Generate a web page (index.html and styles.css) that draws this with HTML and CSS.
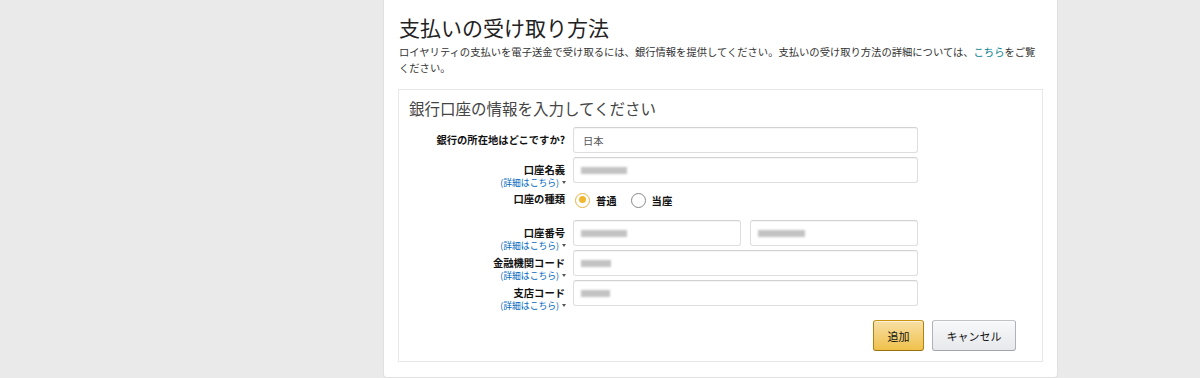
FILE: index.html
```html
<!DOCTYPE html>
<html lang="ja">

<head>
    <meta charset="UTF-8">
    <meta name="viewport" content="width=device-width, initial-scale=1.0">
    <title>支払いの受け取り方法</title>
    <link rel="stylesheet" href="styles.css">
</head>

<body>
    <div class="page">
        <div class="card">
            <h1 class="title">支払いの受け取り方法</h1>
            <p class="desc">ロイヤリティの支払いを電子送金で受け取るには、銀行情報を提供してください。支払いの受け取り方法の詳細については、<a href="#">こちら</a>をご覧ください。</p>

            <div class="panel">
                <h2 class="panel-title">銀行口座の情報を入力してください</h2>

                <div class="row">
                    <div class="label"><span class="main">銀行の所在地はどこですか?</span></div>
                    <div class="field wide"><span class="value">日本</span></div>
                </div>

                <div class="row">
                    <div class="label">
                        <span class="main">口座名義</span>
                        <a class="more" href="#">(詳細はこちら)<i class="caret"></i></a>
                    </div>
                    <div class="field wide"><span class="blur w46"></span></div>
                </div>

                <div class="row radio-row">
                    <div class="label"><span class="main">口座の種類</span></div>
                    <div class="radios">
                        <span class="radio checked"></span><span class="opt">普通</span>
                        <span class="radio"></span><span class="opt">当座</span>
                    </div>
                </div>

                <div class="row">
                    <div class="label">
                        <span class="main">口座番号</span>
                        <a class="more" href="#">(詳細はこちら)<i class="caret"></i></a>
                    </div>
                    <div class="pair">
                        <div class="field half"><span class="blur w46"></span></div>
                        <div class="field half"><span class="blur w47"></span></div>
                    </div>
                </div>

                <div class="row gap5">
                    <div class="label">
                        <span class="main">金融機関コード</span>
                        <a class="more" href="#">(詳細はこちら)<i class="caret"></i></a>
                    </div>
                    <div class="field wide"><span class="blur w30"></span></div>
                </div>

                <div class="row gap6">
                    <div class="label">
                        <span class="main">支店コード</span>
                        <a class="more" href="#">(詳細はこちら)<i class="caret"></i></a>
                    </div>
                    <div class="field wide"><span class="blur w29"></span></div>
                </div>

                <div class="actions">
                    <button class="btn primary">追加</button>
                    <button class="btn">キャンセル</button>
                </div>
            </div>
        </div>
    </div>
</body>

</html>
```

FILE: styles.css
```css
body {
    margin: 0;
    padding: 0;
    background-color: #eaeaea;
    font-family: "Noto Sans CJK JP", "Liberation Sans", sans-serif;
    color: #333;
}

.page {
    padding-left: 383px;
}

.card {
    width: 645px;
    background-color: #fff;
    border: 1px solid #e0e0e0;
    border-top: none;
    border-radius: 0 0 4px 4px;
    padding: 12px 14px 15px 14px;
}

.title {
    font-size: 21px;
    font-weight: normal;
    line-height: 30px;
    margin: 0 0 2px 1px;
    color: #222;
}

.desc {
    font-size: 10.3px;
    line-height: 16px;
    margin: 0 0 13px 0;
    padding-left: 1px;
    color: #333;
}

.desc a {
    color: #0a7f8f;
    text-decoration: none;
}

.panel {
    border: 1px solid #e7e7e7;
    padding: 7px 10px 10px 10px;
}

.panel-title {
    font-size: 15.5px;
    font-weight: normal;
    line-height: 22px;
    margin: 0 0 8px 0;
    color: #444;
}

.row {
    display: flex;
    height: 26px;
    margin-bottom: 4px;
}

.row.gap5 {
    margin-top: 1px;
}

.row.gap6 {
    margin-top: 2px;
}

.label {
    width: 157px;
    margin-right: 7px;
    text-align: right;
    padding-top: 6px;
    flex-shrink: 0;
}

.main {
    display: block;
    font-size: 10.3px;
    font-weight: bold;
    line-height: 14px;
    color: #111;
    padding-right: 1px;
}

.more {
    display: block;
    font-size: 8.8px;
    line-height: 12px;
    color: #0066c0;
    text-decoration: none;
}

.caret {
    display: inline-block;
    width: 0;
    height: 0;
    margin-left: 3px;
    vertical-align: 2px;
    border-left: 2px solid transparent;
    border-right: 2px solid transparent;
    border-top: 3px solid #555;
}

.field {
    box-sizing: border-box;
    height: 26px;
    border: 1px solid #dedede;
    border-top-color: #d2d2d2;
    border-radius: 3px;
    box-shadow: inset 0 1px 0 rgba(0, 0, 0, 0.04);
    padding-left: 9px;
    display: flex;
    align-items: center;
}

.wide {
    width: 345px;
}

.half {
    width: 168px;
}

.pair {
    display: flex;
    gap: 9px;
}

.value {
    font-size: 10.3px;
    color: #555;
}

.blur {
    display: inline-block;
    height: 7px;
    background-color: #c3c3c3;
    filter: blur(0.8px);
    margin-left: -2px;
}

.w46 { width: 46px; }
.w47 { width: 47px; }
.w30 { width: 30px; }
.w29 { width: 29px; }

.radio-row {
    height: 20px;
    margin-top: 7px;
    margin-bottom: 10px;
}

.radio-row .label {
    padding-top: 2px;
}

.radios {
    display: flex;
    align-items: center;
    padding-left: 2px;
}

.radio {
    box-sizing: border-box;
    width: 15px;
    height: 15px;
    border: 1px solid #888;
    border-radius: 50%;
    background-color: #fff;
    margin-right: 6px;
    position: relative;
}

.radio.checked {
    border: 1.5px solid #e8b243;
}

.radio.checked::after {
    content: "";
    position: absolute;
    left: 2.5px;
    top: 2.5px;
    width: 7px;
    height: 7px;
    border-radius: 50%;
    background-color: #f0b72f;
}

.opt {
    font-size: 10.3px;
    font-weight: bold;
    color: #111;
    margin-right: 14px;
}

.actions {
    display: flex;
    justify-content: flex-end;
    gap: 8px;
    margin-top: 14px;
    padding-right: 16px;
}

.btn {
    height: 31px;
    font-family: "Noto Sans CJK JP", "Liberation Sans", sans-serif;
    font-size: 11px;
    color: #111;
    border: 1px solid #adb1b8;
    border-top-color: #bfc2c7;
    border-bottom-color: #a2a6ac;
    border-radius: 3px;
    background: linear-gradient(to bottom, #f7f8fa, #e7e9ec);
    box-shadow: inset 0 1px 0 rgba(255, 255, 255, 0.6);
    width: 84px;
    padding: 0;
}

.btn.primary {
    width: 51px;
    border-color: #c89411 #b0820f #99710d;
    background: linear-gradient(to bottom, #f7dfa5, #f0c14b);
}
```
